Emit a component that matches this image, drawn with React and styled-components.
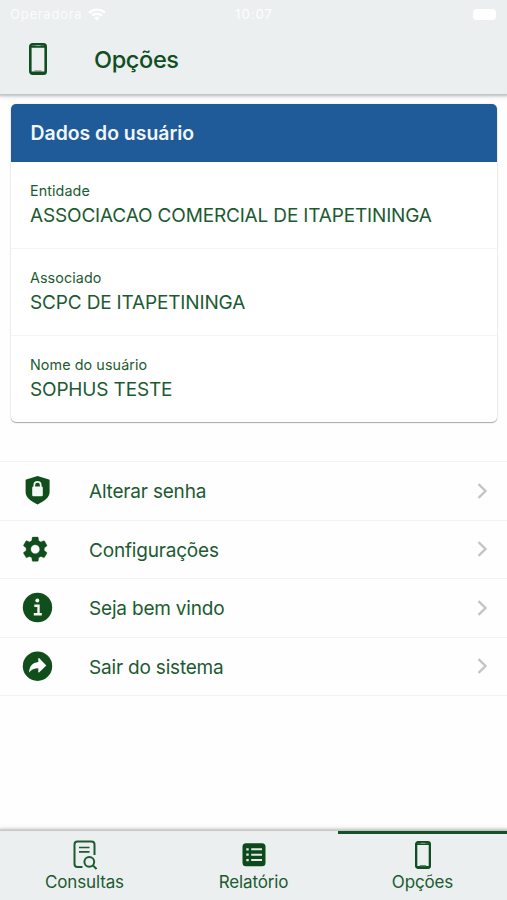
import styled, { createGlobalStyle } from "styled-components";

const GlobalStyle = createGlobalStyle`
  * {
    box-sizing: border-box;
  }

  body {
    margin: 0;
    background-color: #fefefe;
    font-family: Inter, "Liberation Sans", sans-serif;
    color: #1c5a31;
  }

  svg {
    display: block;
    flex-shrink: 0;
  }
`;

const Screen = styled.div`
  display: flex;
  flex-direction: column;
  width: 507px;
  height: 900px;
  overflow: hidden;
`;

const Header = styled.header`
  height: 94px;
  background-color: #ebefef;
  box-shadow: 0 1px 2px 1px #bfc3c3, 0 3px 5px #e6e6e6;
`;

const StatusBar = styled.div`
  display: grid;
  grid-template-columns: 1fr auto 1fr;
  align-items: center;
  height: 28px;
  padding: 0 11px 0 10px;
  color: #fbfcfc;
  font-size: 13px;
`;

const Carrier = styled.div`
  display: flex;
  align-items: center;
  gap: 6px;
  letter-spacing: 0.75px;
`;

const Clock = styled.span`
  padding-left: 2px;
  font-weight: 500;
  letter-spacing: 0.9px;
`;

const Battery = styled.span`
  justify-self: end;
  width: 23px;
  height: 11px;
  border-radius: 4px;
  background-color: #ffffff;
`;

const TitleBar = styled.div`
  display: flex;
  align-items: center;
  gap: 47px;
  height: 62px;
  padding-left: 29px;
`;

const Title = styled.h1`
  margin: 0;
  padding-top: 2px;
  color: #104e22;
  font-size: 23.5px;
  font-weight: 500;
  line-height: 30px;
  letter-spacing: -0.35px;
`;

const Content = styled.main`
  flex: 1;
  padding-top: 10px;
`;

const Card = styled.section`
  margin: 0 10px 0 11px;
  border-radius: 5px;
  overflow: hidden;
  background-color: #ffffff;
  box-shadow: 0 1px 1px #a9a9a9, 0 0 2px #d9d9d9;
`;

const CardTitle = styled.h2`
  margin: 0;
  height: 58px;
  padding-left: 19.5px;
  background-color: #1e5b98;
  color: #f1f6fb;
  font-size: 19.4px;
  font-weight: 600;
  line-height: 58px;
`;

const Field = styled.div`
  height: 87px;
  padding: 19px 19px 0;
  border-bottom: 1px solid #f4f4f4;

  &:last-child {
    height: 86px;
    border-bottom: none;
  }
`;

const FieldLabel = styled.div`
  font-size: 14.3px;
  line-height: 20px;
  letter-spacing: 0.1px;
`;

const FieldValue = styled.div`
  font-size: 19px;
  line-height: 30px;
  white-space: nowrap;
  letter-spacing: -0.16px;
`;

const Menu = styled.nav`
  margin-top: 39px;
  border-top: 1px solid #f3f3f3;
`;

const MenuItem = styled.div`
  display: grid;
  grid-template-columns: 67px 1fr auto;
  align-items: center;
  height: 58.5px;
  padding: 0 19px 0 22px;
  border-bottom: 1px solid #f3f3f3;
`;

const MenuText = styled.span`
  padding-top: 2px;
  font-size: 19px;
  letter-spacing: -0.19px;
`;

const TabBar = styled.footer`
  display: grid;
  grid-template-columns: repeat(3, 1fr);
  height: 69px;
  background-color: #ebefef;
  box-shadow: 0 -1px 2px 1px #c3c5c5, 0 -3px 5px #e9e9e9;
`;

const Tab = styled.div`
  display: flex;
  flex-direction: column;
  align-items: center;
  padding-top: 5px;
  border-top: 3px solid ${(props) => (props.$active ? "#14512a" : "transparent")};
`;

const TabIcon = styled.div`
  display: flex;
  align-items: center;
  height: 31px;
`;

const TabText = styled.span`
  margin-top: 1px;
  font-size: 17px;
  line-height: 22px;
  letter-spacing: -0.15px;
`;

function PhoneIcon({ width, height }) {
  return (
    <svg width={width} height={height} viewBox="0 0 18 32" preserveAspectRatio="none">
      <rect x="1.3" y="1.3" width="15.4" height="29.4" rx="2.2" fill="none" stroke="#104e22" strokeWidth="2.6" />
      <path d="M1.5 2.5h15v2.2h-15zM1.5 28.5h15v1.7h-15z" fill="#104e22" />
      <path d="M6.5 2.6h5" stroke="#8da996" />
      <path d="M5.5 28.2h7" stroke="#66856f" strokeWidth="1.5" />
    </svg>
  );
}

function WifiIcon() {
  return (
    <svg width="18" height="13" viewBox="0 0 18 13" fill="none" stroke="#ffffff">
      <path d="M1 4.8C5.5 0.6 12.5 0.6 17 4.8M3.9 7.7C6.8 5.1 11.2 5.1 14.1 7.7" strokeWidth="2.3" />
      <path d="M9 12.5 6.3 9.7C7.8 8.5 10.2 8.5 11.7 9.7Z" fill="#ffffff" stroke="none" />
    </svg>
  );
}

function ShieldIcon() {
  return (
    <svg width="30" height="30" viewBox="0 0 30 30">
      <path
        d="M15.5 0 27 3.6c.4.1.6.5.6.9V16c0 5.8-6 9.5-12.1 12.4C9.5 25.5 3.6 21.8 3.6 16V4.5c0-.4.2-.8.6-.9Z"
        fill="#104e1c"
      />
      <rect x="10.2" y="10.6" width="10.6" height="9.6" rx="1.2" fill="#f4f7f5" />
      <path d="M12.3 11.5V9a3.2 3.2 0 0 1 6.4 0v2.5" fill="none" stroke="#f4f7f5" strokeWidth="1.7" />
    </svg>
  );
}

function GearIcon() {
  return (
    <svg width="30" height="30" viewBox="0 0 30 30">
      <path
        transform="translate(-1.9 .1) scale(1.26)"
        d="M19.14 12.94c.04-.3.06-.61.06-.94 0-.32-.02-.64-.07-.94l2.03-1.58a.49.49 0 0 0 .12-.61l-1.92-3.32a.488.488 0 0 0-.59-.22l-2.39.96c-.5-.38-1.03-.7-1.62-.94L14.4 2.81a.484.484 0 0 0-.48-.41h-3.84a.47.47 0 0 0-.47.41L9.25 5.35c-.59.24-1.13.57-1.62.94l-2.39-.96a.48.48 0 0 0-.59.22L2.74 8.87c-.12.21-.08.47.12.61l2.03 1.58c-.05.3-.09.63-.09.94s.02.64.07.94l-2.03 1.58a.49.49 0 0 0-.12.61l1.92 3.32c.12.22.37.29.59.22l2.39-.96c.5.38 1.03.7 1.62.94l.36 2.54c.05.24.24.41.48.41h3.84c.24 0 .44-.17.47-.41l.36-2.54c.59-.24 1.13-.56 1.62-.94l2.39.96c.22.08.47 0 .59-.22l1.92-3.32a.48.48 0 0 0-.12-.61ZM12 15.6A3.61 3.61 0 0 1 8.4 12c0-1.98 1.62-3.6 3.6-3.6s3.6 1.62 3.6 3.6-1.62 3.6-3.6 3.6Z"
        fill="#104e1c"
        stroke="#104e1c"
        strokeWidth=".3"
      />
    </svg>
  );
}

function InfoIcon() {
  return (
    <svg width="31" height="31" viewBox="0 0 31 31">
      <circle cx="15.5" cy="15.5" r="14.7" fill="#104e1c" />
      <circle cx="15.3" cy="8.5" r="2" fill="#f4f7f5" />
      <path d="M12.3 13.7h4.2v8M11.8 22.2h8" fill="none" stroke="#f4f7f5" strokeWidth="2.4" />
    </svg>
  );
}

function LeaveIcon() {
  return (
    <svg width="31" height="31" viewBox="0 0 31 31">
      <circle cx="15.5" cy="15.2" r="14.7" fill="#104e1c" />
      <path
        d="m24.3 14.4-7-7.2c-.5-.4-1-.2-1 .4V11c-6 .6-9.1 4.500-9.100 10.500 2.300-3 5-4.300 9.100-4.300v3.700c0 .6.6.8 1 .4Z"
        fill="#ffffff"
      />
    </svg>
  );
}

function ChevronIcon() {
  return (
    <svg width="11" height="16" viewBox="0 0 11 16" fill="none" stroke="#c5c5c7" strokeWidth="2.4">
      <path d="m1.5 1.2 7 6.8-7 6.8" />
    </svg>
  );
}

function SearchDocIcon() {
  return (
    <svg width="24" height="30" viewBox="0 0 24 30" fill="none" stroke="#1c5a31" strokeWidth="2">
      <path d="M9.5 27h-5c-2 0-3-1-3-3V4.5c0-2 1-3 3-3h14c2 0 3 1 3 3V15" />
      <path d="M6 7.5h10.5M6 11.8h10.5" strokeWidth="1.7" />
      <circle cx="16.3" cy="21.8" r="4.9" />
      <path d="m19.9 25.4 3.600 3.600" />
    </svg>
  );
}

function ListIcon() {
  return (
    <svg width="24" height="24" viewBox="0 0 24 24">
      <rect x=".5" y=".3" width="23" height="23" rx="3.5" fill="#0d4a1b" />
      <path d="M9.2 6.300H20M9.200 11.700H20M9.200 17.100H20" stroke="#e3eae6" strokeWidth="2" />
      <path d="M4.300 6.300h2.400M4.300 11.700h2.400M4.300 17.100h2.400" stroke="#e3eae6" strokeWidth="2.2" />
    </svg>
  );
}

const fields = [
  { label: "Entidade", value: "ASSOCIACAO COMERCIAL DE ITAPETININGA" },
  { label: "Associado", value: "SCPC DE ITAPETININGA" },
  { label: "Nome do usuário", value: "SOPHUS TESTE" },
];

const menuItems = [
  { text: "Alterar senha", icon: <ShieldIcon /> },
  { text: "Configurações", icon: <GearIcon /> },
  { text: "Seja bem vindo", icon: <InfoIcon /> },
  { text: "Sair do sistema", icon: <LeaveIcon /> },
];

const tabs = [
  { text: "Consultas", icon: <SearchDocIcon /> },
  { text: "Relatório", icon: <ListIcon /> },
  { text: "Opções", icon: <PhoneIcon width={16} height={28} />, active: true },
];

function App() {
  return (
    <>
      <GlobalStyle />
      <Screen>
        <Header>
          <StatusBar>
            <Carrier>
              Operadora
              <WifiIcon />
            </Carrier>
            <Clock>10:07</Clock>
            <Battery />
          </StatusBar>
          <TitleBar>
            <PhoneIcon width={18} height={32} />
            <Title>Opções</Title>
          </TitleBar>
        </Header>
        <Content>
          <Card>
            <CardTitle>Dados do usuário</CardTitle>
            {fields.map((field) => (
              <Field key={field.label}>
                <FieldLabel>{field.label}</FieldLabel>
                <FieldValue>{field.value}</FieldValue>
              </Field>
            ))}
          </Card>
          <Menu>
            {menuItems.map((item) => (
              <MenuItem key={item.text}>
                {item.icon}
                <MenuText>{item.text}</MenuText>
                <ChevronIcon />
              </MenuItem>
            ))}
          </Menu>
        </Content>
        <TabBar>
          {tabs.map((tab) => (
            <Tab key={tab.text} $active={tab.active}>
              <TabIcon>{tab.icon}</TabIcon>
              <TabText>{tab.text}</TabText>
            </Tab>
          ))}
        </TabBar>
      </Screen>
    </>
  );
}

export default App;
